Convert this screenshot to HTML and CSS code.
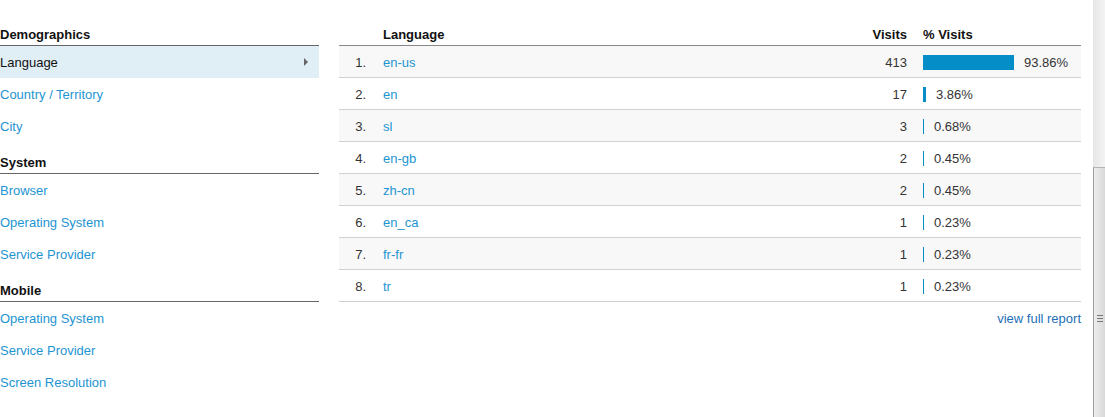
FILE: index.html
```html
<!DOCTYPE html>
<html lang="en">
<head>
    <meta charset="UTF-8">
    <title>Audience - Technology</title>
    <link rel="stylesheet" href="styles.css">
</head>
<body>
    <div class="page">
        <div class="content">
            <div class="nav">
                <div class="nav-header">Demographics</div>
                <a class="nav-item selected" href="#">Language<span class="arrow"></span></a>
                <a class="nav-item" href="#">Country / Territory</a>
                <a class="nav-item" href="#">City</a>
                <div class="nav-header">System</div>
                <a class="nav-item" href="#">Browser</a>
                <a class="nav-item" href="#">Operating System</a>
                <a class="nav-item" href="#">Service Provider</a>
                <div class="nav-header">Mobile</div>
                <a class="nav-item" href="#">Operating System</a>
                <a class="nav-item" href="#">Service Provider</a>
                <a class="nav-item" href="#">Screen Resolution</a>
            </div>
            <div class="report">
                <table class="data">
                    <thead>
                        <tr>
                            <th class="rank"></th>
                            <th class="lang">Language</th>
                            <th class="visits">Visits</th>
                            <th class="pct">% Visits</th>
                        </tr>
                    </thead>
                    <tbody>
                        <tr>
                            <td class="rank">1.</td>
                            <td class="lang"><a href="#">en-us</a></td>
                            <td class="visits">413</td>
                            <td class="pct"><span class="bar" style="width: 91px"></span>93.86%</td>
                        </tr>
                        <tr>
                            <td class="rank">2.</td>
                            <td class="lang"><a href="#">en</a></td>
                            <td class="visits">17</td>
                            <td class="pct"><span class="bar" style="width: 3px"></span>3.86%</td>
                        </tr>
                        <tr>
                            <td class="rank">3.</td>
                            <td class="lang"><a href="#">sl</a></td>
                            <td class="visits">3</td>
                            <td class="pct"><span class="bar" style="width: 1px"></span>0.68%</td>
                        </tr>
                        <tr>
                            <td class="rank">4.</td>
                            <td class="lang"><a href="#">en-gb</a></td>
                            <td class="visits">2</td>
                            <td class="pct"><span class="bar" style="width: 1px"></span>0.45%</td>
                        </tr>
                        <tr>
                            <td class="rank">5.</td>
                            <td class="lang"><a href="#">zh-cn</a></td>
                            <td class="visits">2</td>
                            <td class="pct"><span class="bar" style="width: 1px"></span>0.45%</td>
                        </tr>
                        <tr>
                            <td class="rank">6.</td>
                            <td class="lang"><a href="#">en_ca</a></td>
                            <td class="visits">1</td>
                            <td class="pct"><span class="bar" style="width: 1px"></span>0.23%</td>
                        </tr>
                        <tr>
                            <td class="rank">7.</td>
                            <td class="lang"><a href="#">fr-fr</a></td>
                            <td class="visits">1</td>
                            <td class="pct"><span class="bar" style="width: 1px"></span>0.23%</td>
                        </tr>
                        <tr>
                            <td class="rank">8.</td>
                            <td class="lang"><a href="#">tr</a></td>
                            <td class="visits">1</td>
                            <td class="pct"><span class="bar" style="width: 1px"></span>0.23%</td>
                        </tr>
                    </tbody>
                </table>
                <div class="more"><a href="#">view full report</a></div>
            </div>
        </div>
        <div class="scrollbar">
            <div class="thumb"><span class="grip"></span></div>
        </div>
    </div>
</body>
</html>
```

FILE: styles.css
```css
body {
    font-family: "Liberation Sans", Arial, sans-serif;
    font-size: 13px;
    color: #222;
    margin: 0;
    padding: 0;
    background: #fff;
}
a {
    color: #1e94d2;
    text-decoration: none;
}
.page {
    display: flex;
    height: 417px;
    overflow: hidden;
}
.content {
    flex: 1;
    display: flex;
    gap: 20px;
    padding-top: 14px;
    padding-right: 12px;
}
.nav {
    width: 319px;
    display: flex;
    flex-direction: column;
}
.nav-header {
    font-weight: bold;
    line-height: 16px;
    padding: 13px 0 2px;
    border-bottom: 1px solid #666;
    color: #111;
}
.nav-item {
    display: flex;
    align-items: center;
    justify-content: space-between;
    height: 32px;
    box-sizing: border-box;
    line-height: 31px;
    padding: 1px 11px 0 0;
}
.nav-item.selected {
    background-color: #e0eef6;
    color: #111;
}
.arrow {
    width: 0;
    height: 0;
    margin-top: -1px;
    border-left: 4px solid #666;
    border-top: 4px solid transparent;
    border-bottom: 4px solid transparent;
}
.report {
    width: 742px;
}
.data {
    width: 100%;
    border-collapse: separate;
    border-spacing: 0;
}
.data th {
    font-weight: bold;
    text-align: left;
    line-height: 16px;
    padding: 13px 0 2px;
    border-bottom: 1px solid #888;
    color: #111;
}
.data td {
    padding: 2px 0 0;
    line-height: 29px;
    border-bottom: 1px solid #d0d0d0;
    color: #333;
}
.data tbody tr:nth-child(odd) td {
    background-color: #f8f8f8;
}
.data .rank {
    width: 27px;
    padding-right: 17px;
    text-align: right;
}
.data .visits {
    text-align: right;
    padding-right: 16px;
}
.data .pct {
    width: 158px;
    text-align: left;
}
.bar {
    display: inline-block;
    height: 15px;
    min-width: 1px;
    background-color: #058dc7;
    margin-right: 10px;
    vertical-align: -3px;
}
.more {
    text-align: right;
    line-height: 16px;
    margin-top: 9px;
}
.more a {
    color: #1d6fb8;
}
.scrollbar {
    width: 12px;
    background: linear-gradient(to right, #e6e6e6, #f4f4f4);
    display: flex;
    flex-direction: column;
    justify-content: flex-end;
}
.thumb {
    height: 250px;
    border-left: 1px solid #a0a0a0;
    border-top: 1px solid #b4b4b4;
    background: linear-gradient(to right, #eeeeee, #d8d8d8);
    display: flex;
    justify-content: center;
    padding-top: 147px;
    box-sizing: border-box;
}
.grip {
    width: 6px;
    height: 5px;
    border-top: 1px solid #777;
    border-bottom: 1px solid #777;
    background: linear-gradient(#777, #777) center / 100% 1px no-repeat;
}
```
